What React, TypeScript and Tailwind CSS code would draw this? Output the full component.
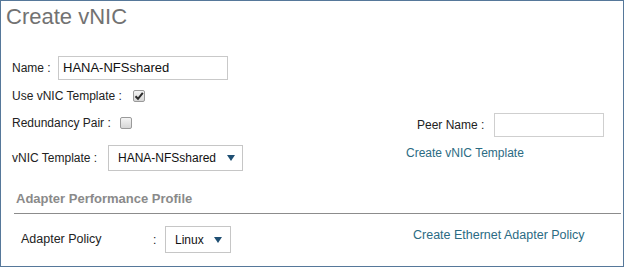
const Check = ({ checked }: { checked?: boolean }) => {
  return (
    <div className="w-[12px] h-[12px] border border-[#9a9a9a] rounded-[2px] bg-gradient-to-b from-[#f4f4f4] to-[#d6d6d6] flex items-center justify-center">
      {checked && (
        <svg width="10" height="10" viewBox="0 0 10 10">
          <path d="M1.5 5.2 L4 7.8 L8.8 1.8" stroke="#2b2b2b" strokeWidth="2" fill="none" />
        </svg>
      )}
    </div>
  )
}

const Arrow = () => {
  return (
    <svg width="8" height="6" viewBox="0 0 8 6">
      <path d="M0 0 L8 0 L4 6 Z" fill="#1f4f73" />
    </svg>
  )
}

export default function App() {
  return (
    <div
      className="w-[624px] h-[267px] border border-[#56789a] bg-white text-[12px] text-[#222] overflow-hidden"
      style={{ fontFamily: '"Liberation Sans", Arial, sans-serif' }}
    >
      <div className="mt-[4px] pl-[5px] h-[24px] leading-[24px] text-[22px] text-[#727272]">Create vNIC</div>

      {/* name */}
      <div className="mt-[27px] pl-[11px] flex items-center h-[24px]">
        <div className="w-[46px]">Name :</div>
        <div className="w-[170px] h-[24px] border border-[#c9c9c9] pl-[4px] text-[13px] leading-[22px] text-[#111]">
          HANA-NFSshared
        </div>
      </div>

      {/* use template */}
      <div className="mt-[6px] pl-[11px] flex items-center h-[20px]">
        <div className="w-[121px]">Use vNIC Template :</div>
        <Check checked />
      </div>

      {/* redundancy / peer */}
      <div className="mt-[7px] pl-[11px] flex items-start h-[24px]">
        <div className="w-[394px] flex items-center h-[20px]">
          <div className="w-[108px]">Redundancy Pair :</div>
          <Check />
        </div>
        <div className="flex items-center h-[24px] pl-[11px]">
          <div className="w-[77px]">Peer Name :</div>
          <div className="w-[110px] h-[24px] border border-[#cfcfcf]" />
        </div>
      </div>

      {/* template select */}
      <div className="mt-[8px] pl-[11px] flex items-start h-[26px]">
        <div className="w-[394px] flex items-center h-[26px]">
          <div className="w-[96px]">vNIC Template :</div>
          <div className="w-[135px] h-[26px] border border-[#c6c6c6] flex items-center justify-between pl-[9px] pr-[7px] text-[#111]">
            <span>HANA-NFSshared</span>
            <Arrow />
          </div>
        </div>
        <div className="leading-[16px] text-[#2b6b83]">Create vNIC Template</div>
      </div>

      <div className="mt-[20px] pl-[15px] h-[16px] leading-[16px] text-[13px] font-bold text-[#8a8a8a]">
        Adapter Performance Profile
      </div>
      <div className="mt-[6px] ml-[13px] mr-[2px] h-px bg-[#8c8c8c]" />

      {/* adapter policy */}
      <div className="mt-[12px] pl-[20px] flex items-start h-[27px]">
        <div className="w-[392px] flex items-center h-[27px]">
          <div className="w-[132px] text-[12.5px]">Adapter Policy</div>
          <div className="w-[12px]">:</div>
          <div className="w-[66px] h-[27px] border border-[#c6c6c6] flex items-center justify-between pl-[9px] pr-[8px] text-[#111]">
            <span>Linux</span>
            <Arrow />
          </div>
        </div>
        <div className="mt-px leading-[16px] text-[12.5px] text-[#2b6b83]">Create Ethernet Adapter Policy</div>
      </div>
    </div>
  )
}
